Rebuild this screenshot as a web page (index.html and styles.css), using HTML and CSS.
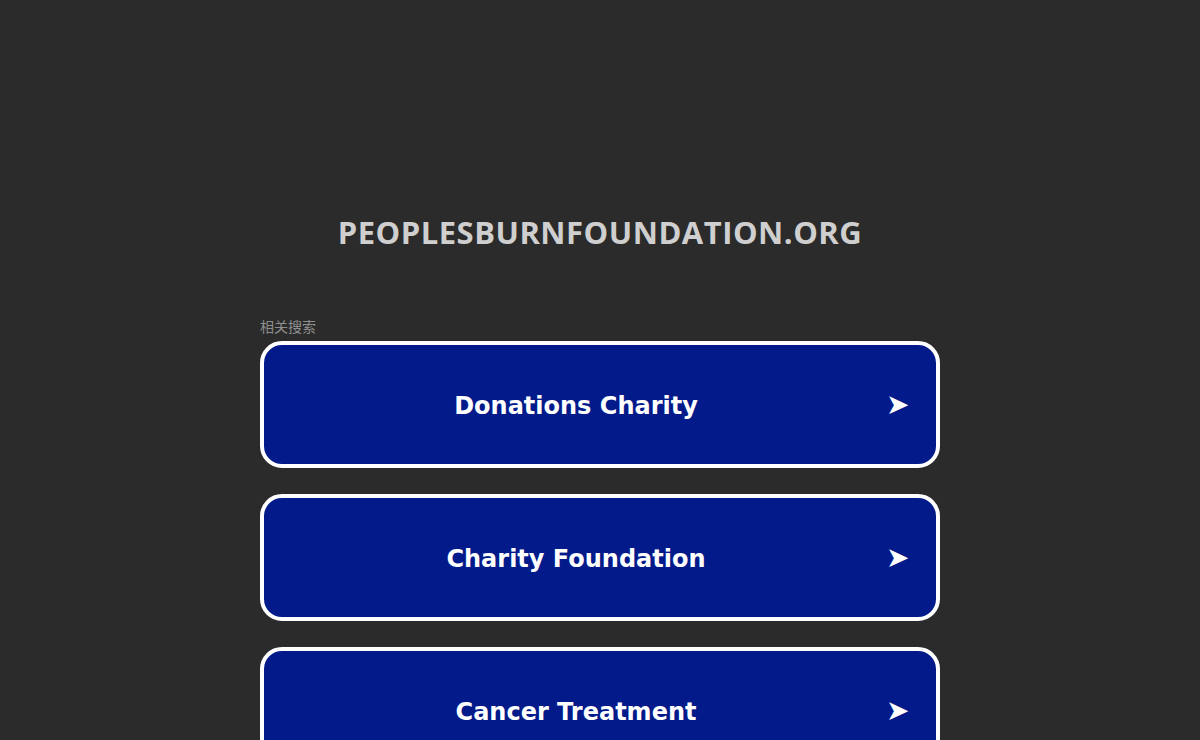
FILE: index.html
```html
<!DOCTYPE html>
<html lang="en">
<head>
<meta charset="utf-8">
<title>peoplesburnfoundation.org</title>
<link rel="stylesheet" href="styles.css">
</head>
<body>
<div class="page">
  <h1 class="domain">PEOPLESBURNFOUNDATION.ORG</h1>
  <div class="related">
    <div class="label">相关搜索</div>
    <a class="btn" href="#"><span class="btn-text">Donations Charity</span><span class="arrow">➤</span></a>
    <a class="btn" href="#"><span class="btn-text">Charity Foundation</span><span class="arrow">➤</span></a>
    <a class="btn" href="#"><span class="btn-text">Cancer Treatment</span><span class="arrow">➤</span></a>
  </div>
</div>
</body>
</html>
```
FILE: styles.css
```css
html, body {
  margin: 0;
  padding: 0;
  background: #2b2b2b;
  height: 100%;
  overflow: hidden;
}
.page {
  display: flex;
  flex-direction: column;
  align-items: center;
  padding-top: 212px;
}
.domain {
  margin: 0;
  font-family: "Open Sans", "Liberation Sans", sans-serif;
  font-weight: 700;
  font-size: 31px;
  line-height: 40px;
  color: #cfcfcf;
  letter-spacing: 0.5px;
}
.related {
  width: 680px;
  margin-top: 65px;
  display: flex;
  flex-direction: column;
}
.label {
  font-family: "Noto Sans CJK SC", "Liberation Sans", sans-serif;
  font-size: 14px;
  line-height: 18px;
  color: #8f8f8f;
  margin-bottom: 6px;
}
.btn {
  display: flex;
  align-items: center;
  height: 119px;
  border: 4px solid #ffffff;
  border-radius: 22px;
  background: #021a8a;
  color: #ffffff;
  text-decoration: none;
  padding-right: 28px;
  margin-bottom: 26px;
}
.btn-text {
  flex: 1;
  text-align: center;
  font-family: "DejaVu Sans", Verdana, sans-serif;
  font-weight: 700;
  font-size: 24px;
  padding-top: 2px;
  padding-left: 2px;
}
.arrow {
  width: 22px;
  font-family: "DejaVu Sans", sans-serif;
  font-size: 28px;
  line-height: 1;
}
```
